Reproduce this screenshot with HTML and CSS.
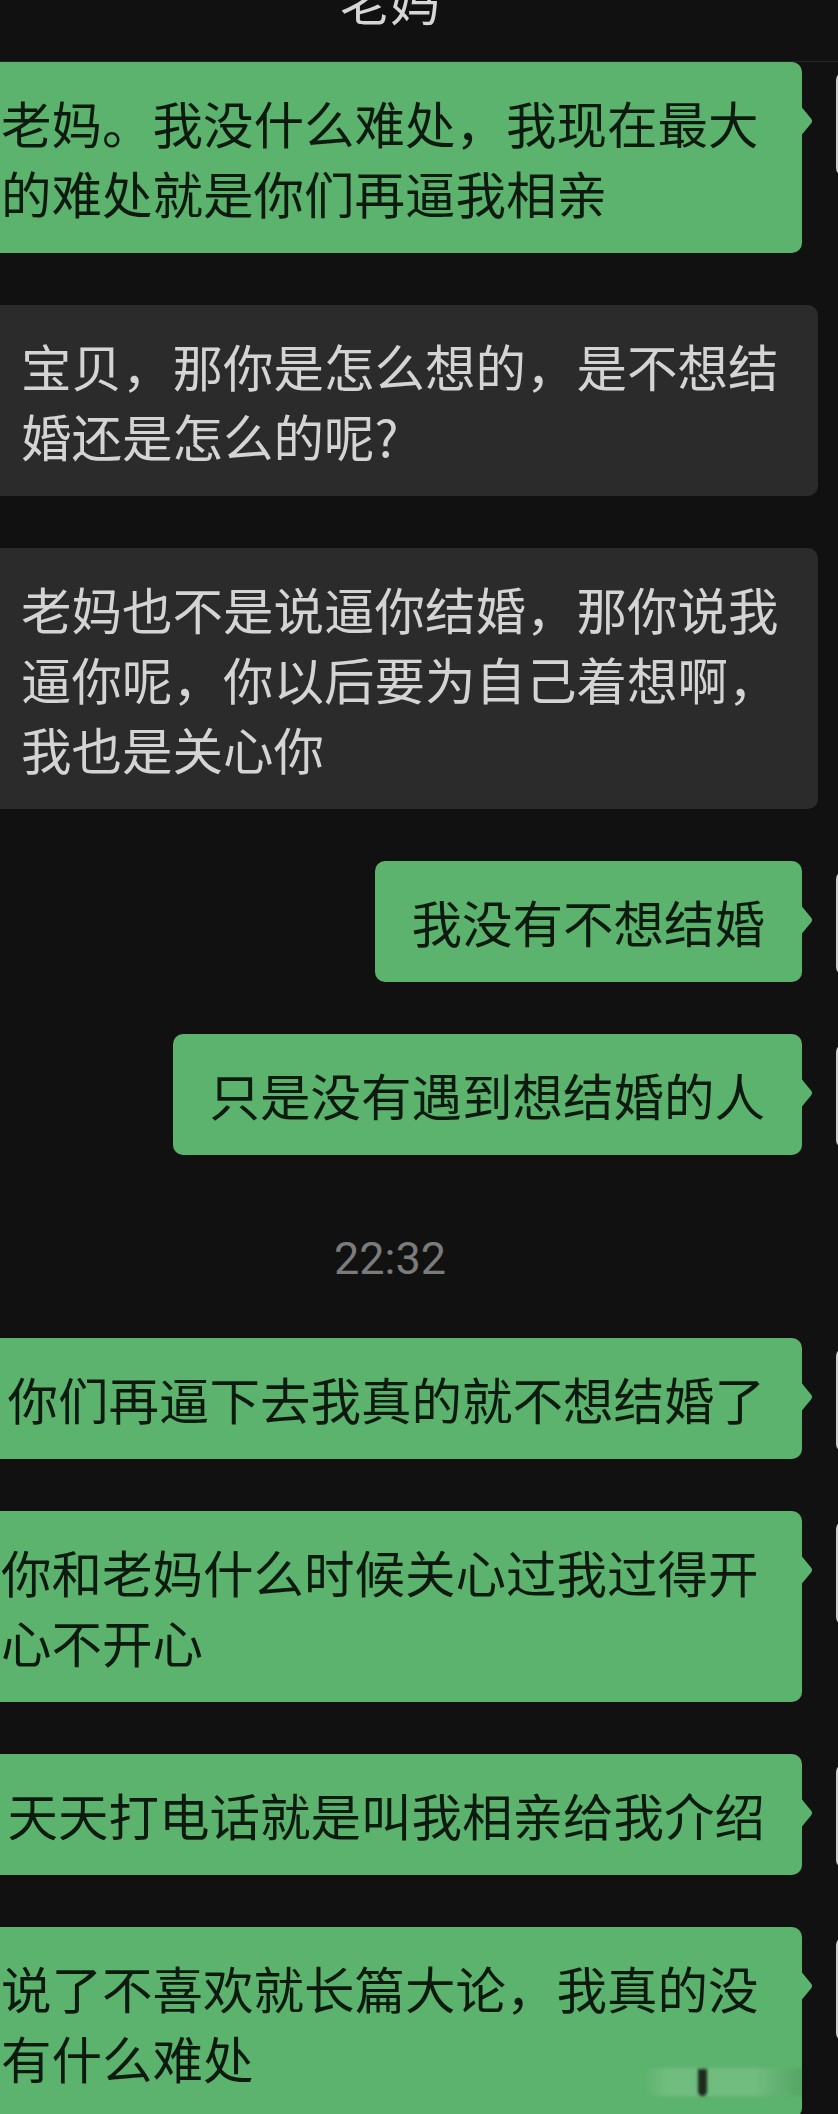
FILE: index.html
```html
<!DOCTYPE html>
<html lang="zh-CN">
<head>
<meta charset="utf-8">
<title>老妈</title>
<link rel="stylesheet" href="styles.css">
</head>
<body>
<div class="screen">
  <header class="header"><div class="title">老妈</div></header>
  <main class="chat">
    <div class="row me"><div class="bubble green">老妈。我没什么难处，我现在最大的难处就是你们再逼我相亲</div><div class="avatar"></div></div>
    <div class="row them"><div class="avatar"></div><div class="bubble gray">宝贝，那你是怎么想的，是不想结婚还是怎么的呢?</div></div>
    <div class="row them"><div class="avatar"></div><div class="bubble gray">老妈也不是说逼你结婚，那你说我逼你呢，你以后要为自己着想啊，我也是关心你</div></div>
    <div class="row me"><div class="bubble green">我没有不想结婚</div><div class="avatar"></div></div>
    <div class="row me"><div class="bubble green">只是没有遇到想结婚的人</div><div class="avatar"></div></div>
    <div class="time">22:32</div>
    <div class="row me"><div class="bubble green">你们再逼下去我真的就不想结婚了</div><div class="avatar"></div></div>
    <div class="row me"><div class="bubble green">你和老妈什么时候关心过我过得开心不开心</div><div class="avatar"></div></div>
    <div class="row me"><div class="bubble green">天天打电话就是叫我相亲给我介绍</div><div class="avatar"></div></div>
    <div class="row me"><div class="bubble green">说了不喜欢就长篇大论，我真的没有什么难处</div><div class="avatar"></div></div>
  </main>
</div>
<div class="watermark"><span class="wm-bar"></span></div>
</body>
</html>
```

FILE: styles.css
```css
html, body {
  margin: 0;
  padding: 0;
  background: #111111;
  overflow: hidden;
  height: 2114px;
}

.screen {
  width: 1100px;
  margin-left: -160px;
  font-family: "Noto Sans CJK SC", "Noto Sans", sans-serif;
}

.header {
  height: 61px;
  border-bottom: 1px solid #262626;
  display: flex;
  justify-content: center;
  align-items: flex-start;
}

.title {
  margin-top: -26px;
  font-size: 50px;
  line-height: 50px;
  color: #d6d6d6;
}

.chat {
  display: flex;
  flex-direction: column;
  gap: 52px;
}

.row {
  display: flex;
  align-items: flex-start;
  gap: 34px;
}

.row.me {
  justify-content: flex-end;
}

.row.them {
  justify-content: flex-start;
  gap: 40px;
}

.avatar {
  flex: 0 0 104px;
  height: 104px;
  margin-top: 10px;
  border-radius: 8px;
  background: #cfcfcf;
}

.bubble {
  position: relative;
  box-sizing: border-box;
  max-width: 838px;
  padding: 25px 37px 26px;
  font-size: 50.5px;
  line-height: 70px;
  border-radius: 10px;
}

.bubble.green {
  background: #5cb36d;
  color: #0d1a0f;
}

.bubble.green::after {
  content: "";
  position: absolute;
  right: -7px;
  top: 49px;
  width: 20px;
  height: 20px;
  background: #5cb36d;
  border-radius: 3px;
  transform: scaleY(1.2) rotate(45deg);
}

.bubble.gray {
  max-width: 834px;
  background: #2b2b2b;
  color: #d4d4d4;
}

.bubble.gray::after {
  content: "";
  position: absolute;
  left: -7px;
  top: 49px;
  width: 20px;
  height: 20px;
  background: #2b2b2b;
  border-radius: 3px;
  transform: scaleY(1.2) rotate(45deg);
}

.time {
  margin: 27px 0 2px;
  text-align: center;
  font-family: Roboto, "Liberation Sans", sans-serif;
  font-size: 45px;
  line-height: 50px;
  color: #7b7b7b;
}

.watermark {
  position: absolute;
  left: 643px;
  top: 2068px;
  width: 160px;
  height: 28px;
  background: linear-gradient(90deg, rgba(255,255,255,0) 0%, rgba(255,255,255,0.13) 15%, rgba(255,255,255,0.13) 70%, rgba(0,0,0,0.08) 100%);
  filter: blur(1.5px);
}

.wm-bar {
  position: absolute;
  left: 55px;
  top: 1px;
  width: 9px;
  height: 27px;
  background: #1c2b1e;
  border-radius: 0 0 5px 5px;
}
```
